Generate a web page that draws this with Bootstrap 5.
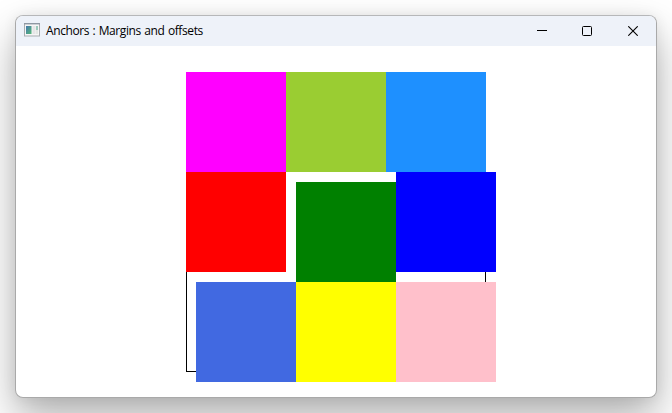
<!DOCTYPE html>
<html lang="en">
<head>
<meta charset="utf-8">
<title>Anchors : Margins and offsets</title>
<link rel="stylesheet" href="https://cdn.jsdelivr.net/npm/bootstrap@5.3.0/dist/css/bootstrap.min.css">
<style>
html,body{height:100%}
body{padding:15px 15px 15px;overflow:hidden;background:#fff}
.app-window{width:642px;height:383px;border:1px solid #a9a9a9;border-top-color:#b6b7b9;border-radius:8px;background:#fff;box-shadow:0 20px 42px rgba(0,0,0,.31),0 0 14px rgba(0,0,0,.07)}
.titlebar{height:30px;background:#eef2f9;border-radius:7px 7px 0 0;padding-left:8px}
.app-icon{margin-bottom:2px}
.app-title{font:12px/16px "Open Sans","Noto Sans",sans-serif;color:#000;margin-left:6px;letter-spacing:-.4px;word-spacing:.7px;white-space:nowrap}
.caption-btn{width:46px;height:30px;color:#000}
.caption-min{width:44px}
.caption-btn svg{display:block}
.stage{padding-top:26px}
.board{width:300px;height:300px;box-shadow:inset 0 0 0 1px #000}
.tile{width:100px;height:100px}
.gap-start{margin-left:10px}
.gap-top{margin-top:10px}
</style>
<script src="https://cdn.jsdelivr.net/npm/bootstrap@5.3.0/dist/js/bootstrap.bundle.min.js"></script>
</head>
<body>
<main class="app-window">
  <header class="titlebar d-flex align-items-center">
    <svg class="app-icon" width="16" height="14" viewBox="0 0 16 14" aria-hidden="true">
      <defs><linearGradient id="pane" x1="0" y1="0" x2="1" y2="1"><stop offset="0" stop-color="#4779ad"/><stop offset="1" stop-color="#55b878"/></linearGradient></defs>
      <rect x=".5" y=".5" width="15" height="12.5" fill="#f6f6f6" stroke="#a9adb1"/>
      <path d="M0 .7h16" stroke="#8f98a3" stroke-width="1.4"/>
      <rect x="2" y="3" width="5.5" height="8" fill="url(#pane)"/>
      <rect x="8.5" y="3" width="3" height="8" fill="#e6e5e6"/>
      <rect x="12" y="3" width="2" height="4" fill="#9ccbbd"/>
      <rect x="12" y="7" width="2" height="4" fill="#e3e8e4"/>
    </svg>
    <span class="app-title">Anchors : Margins and offsets</span>
    <div class="d-flex ms-auto">
      <div class="caption-btn caption-min d-flex align-items-center justify-content-center"><svg width="10" height="10"><path d="M0 4.5h10" stroke="currentColor"/></svg></div>
      <div class="caption-btn d-flex align-items-center justify-content-center"><svg width="10" height="10"><rect x=".5" y=".5" width="9" height="9" rx="1" fill="none" stroke="currentColor"/></svg></div>
      <div class="caption-btn d-flex align-items-center justify-content-center"><svg width="10" height="10"><path d="M.3.3l9.4 9.4M9.7.3L.3 9.7" stroke="currentColor" stroke-width="1.1"/></svg></div>
    </div>
  </header>
  <section class="stage d-flex justify-content-center">
    <div class="board">
      <div class="d-flex align-items-start">
        <div class="tile flex-shrink-0" style="background:#f0f"></div>
        <div class="tile flex-shrink-0" style="background:#9acd32"></div>
        <div class="tile flex-shrink-0" style="background:#1e90ff"></div>
      </div>
      <div class="d-flex align-items-start">
        <div class="tile flex-shrink-0" style="background:#f00"></div>
        <div class="tile flex-shrink-0 gap-start gap-top" style="background:#008000"></div>
        <div class="tile flex-shrink-0" style="background:#00f"></div>
      </div>
      <div class="d-flex align-items-start gap-start">
        <div class="tile flex-shrink-0" style="background:#4169e1"></div>
        <div class="tile flex-shrink-0" style="background:#ff0"></div>
        <div class="tile flex-shrink-0" style="background:#ffc0cb"></div>
      </div>
    </div>
  </section>
</main>
</body>
</html>
